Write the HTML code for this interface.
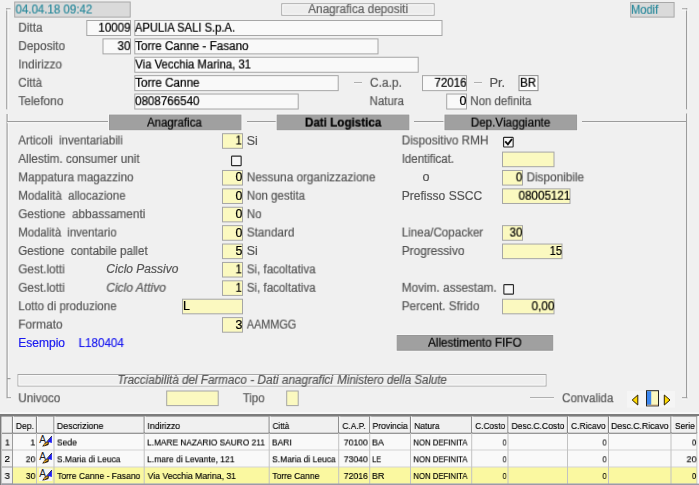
<!DOCTYPE html>
<html lang="it"><head><meta charset="utf-8"><title>Anagrafica depositi</title>
<style>
html,body{margin:0;padding:0;}
body{width:699px;height:485px;overflow:hidden;background:#f0f0f0;position:relative;font-family:"Liberation Sans",Arial,sans-serif;}
svg.bg{position:absolute;left:0;top:0;}
.t{position:absolute;white-space:pre;transform-origin:0 0;will-change:transform;-webkit-text-stroke:0.2px currentColor;}
.g{-webkit-text-stroke:0.16px currentColor;}
.k{-webkit-text-stroke:0.22px currentColor;}
</style></head><body>
<svg class="bg" width="699" height="485" viewBox="0 0 699 485">
<rect x="6.2" y="8.3" width="1.3" height="101" fill="#9c9c9c"/>
<rect x="7.5" y="8.3" width="1" height="101" fill="#fbfbfb"/>
<rect x="6.2" y="8.3" width="4.3" height="1.2" fill="#9c9c9c"/>
<rect x="6.2" y="9.5" width="4.3" height="1" fill="#fbfbfb"/>
<rect x="686" y="8.3" width="1.3" height="101" fill="#9c9c9c"/>
<rect x="687.3" y="8.3" width="1" height="101" fill="#fbfbfb"/>
<rect x="682" y="8.3" width="5.3" height="1.2" fill="#9c9c9c"/>
<rect x="682" y="9.5" width="5.3" height="1" fill="#fbfbfb"/>
<rect x="6.5" y="114" width="1.3" height="284.3" fill="#9c9c9c"/>
<rect x="7.8" y="114" width="1" height="284.3" fill="#fbfbfb"/>
<rect x="686" y="113.5" width="1.3" height="284.8" fill="#9c9c9c"/>
<rect x="687.3" y="113.5" width="1" height="284.8" fill="#fbfbfb"/>
<rect x="7" y="121" width="102" height="1.2" fill="#9c9c9c"/>
<rect x="7" y="122.2" width="102" height="1" fill="#fbfbfb"/>
<rect x="247" y="121" width="29.5" height="1.2" fill="#9c9c9c"/>
<rect x="247" y="122.2" width="29.5" height="1" fill="#fbfbfb"/>
<rect x="414" y="121" width="30.5" height="1.2" fill="#9c9c9c"/>
<rect x="414" y="122.2" width="30.5" height="1" fill="#fbfbfb"/>
<rect x="582" y="121" width="104" height="1.2" fill="#9c9c9c"/>
<rect x="582" y="122.2" width="104" height="1" fill="#fbfbfb"/>
<rect x="7" y="378" width="3.5" height="1.2" fill="#9c9c9c"/>
<rect x="7" y="397.2" width="4" height="1.2" fill="#9c9c9c"/>
<rect x="7" y="398.4" width="4" height="1" fill="#fbfbfb"/>
<rect x="682" y="397.2" width="5.3" height="1.2" fill="#9c9c9c"/>
<rect x="682" y="398.4" width="5.3" height="1" fill="#fbfbfb"/>
<rect x="14.7" y="2" width="115.5" height="15.1" fill="#dadada" stroke="#a8a8a8"/>
<rect x="281.8" y="3.8" width="152.3" height="11.4" fill="#ededed" stroke="#a2a2a2"/>
<rect x="282.8" y="4.8" width="150.3" height="9.4" fill="none" stroke="#f9f9f9"/>
<rect x="630.7" y="2.5" width="43.4" height="14.6" fill="#dadada" stroke="#a8a8a8"/>
<rect x="86.8" y="20.5" width="43.7" height="15" fill="#f9f9f9" stroke="#a6a6a6"/>
<rect x="134.8" y="20.5" width="307.2" height="15" fill="#f9f9f9" stroke="#a6a6a6"/>
<rect x="103" y="38.88" width="27.5" height="15" fill="#f9f9f9" stroke="#a6a6a6"/>
<rect x="134.8" y="38.88" width="243.2" height="15" fill="#f9f9f9" stroke="#a6a6a6"/>
<rect x="134.8" y="57.26" width="283.4" height="15" fill="#f9f9f9" stroke="#a6a6a6"/>
<rect x="134.8" y="75.64" width="203.4" height="15" fill="#f9f9f9" stroke="#a6a6a6"/>
<rect x="134.8" y="94.02" width="163.4" height="15" fill="#f9f9f9" stroke="#a6a6a6"/>
<rect x="354" y="82" width="8" height="1.2" fill="#b0b0b0"/>
<rect x="354" y="83.2" width="8" height="1" fill="#fbfbfb"/>
<rect x="422.5" y="75.64" width="44" height="15" fill="#f9f9f9" stroke="#a6a6a6"/>
<rect x="474" y="82" width="8" height="1.2" fill="#b0b0b0"/>
<rect x="474" y="83.2" width="8" height="1" fill="#fbfbfb"/>
<rect x="519" y="75.64" width="19" height="15" fill="#ffffff" stroke="#8a8a8a"/>
<rect x="446.7" y="94.02" width="19.8" height="15" fill="#f9f9f9" stroke="#a6a6a6"/>
<rect x="108.5" y="114.1" width="133.4" height="16.6" fill="none" stroke="#f6f6f6"/>
<rect x="109.5" y="115.1" width="131.4" height="14.6" fill="#a0a0a0" stroke="#979797"/>
<rect x="276.2" y="114.1" width="133.6" height="16.6" fill="none" stroke="#f6f6f6"/>
<rect x="277.2" y="115.1" width="131.6" height="14.6" fill="#a0a0a0" stroke="#979797"/>
<rect x="444" y="114.1" width="133.6" height="16.6" fill="none" stroke="#f6f6f6"/>
<rect x="445" y="115.1" width="131.6" height="14.6" fill="#a0a0a0" stroke="#979797"/>
<rect x="222.5" y="133.7" width="20" height="14.6" fill="#fbf9c0" stroke="#a6a6a6"/>
<rect x="222.5" y="170.48" width="20" height="14.6" fill="#fbf9c0" stroke="#a6a6a6"/>
<rect x="222.5" y="188.87" width="20" height="14.6" fill="#fbf9c0" stroke="#a6a6a6"/>
<rect x="222.5" y="207.26" width="20" height="14.6" fill="#fbf9c0" stroke="#a6a6a6"/>
<rect x="222.5" y="225.65" width="20" height="14.6" fill="#fbf9c0" stroke="#a6a6a6"/>
<rect x="222.5" y="244.04" width="20" height="14.6" fill="#fbf9c0" stroke="#a6a6a6"/>
<rect x="222.5" y="262.43" width="20" height="14.6" fill="#fbf9c0" stroke="#a6a6a6"/>
<rect x="222.5" y="280.82" width="20" height="14.6" fill="#fbf9c0" stroke="#a6a6a6"/>
<rect x="222.5" y="317.6" width="20" height="14.6" fill="#fbf9c0" stroke="#a6a6a6"/>
<rect x="182.5" y="299.21" width="60" height="14.6" fill="#fbf9c0" stroke="#a6a6a6"/>
<rect x="231.55" y="156.05" width="9.6" height="9.6" rx="0.7" fill="#f7f7f7" stroke="#2c2c2c" stroke-width="1.15"/>
<rect x="503.55" y="137.35" width="9.6" height="9.6" rx="0.7" fill="#f7f7f7" stroke="#2c2c2c" stroke-width="1.15"/>
<path d="M505.2 141.3 L507.9 144.3 L512 139" fill="none" stroke="#111" stroke-width="1.9"/>
<rect x="502.5" y="152.09" width="51.5" height="14.6" fill="#fbf9c0" stroke="#a6a6a6"/>
<rect x="502.5" y="170.48" width="20" height="14.6" fill="#fbf9c0" stroke="#a6a6a6"/>
<rect x="502.5" y="188.87" width="67.5" height="14.6" fill="#fbf9c0" stroke="#a6a6a6"/>
<rect x="502.5" y="225.65" width="20" height="14.6" fill="#fbf9c0" stroke="#a6a6a6"/>
<rect x="502.5" y="244.04" width="59.5" height="14.6" fill="#fbf9c0" stroke="#a6a6a6"/>
<rect x="503.85" y="284.55" width="9.6" height="9.6" rx="0.7" fill="#f7f7f7" stroke="#2c2c2c" stroke-width="1.15"/>
<rect x="502.5" y="299.21" width="51.5" height="14.6" fill="#fbf9c0" stroke="#a6a6a6"/>
<rect x="396.2" y="334.5" width="157.5" height="16.7" fill="none" stroke="#f6f6f6"/>
<rect x="397.2" y="335.5" width="155.5" height="14.7" fill="#a0a0a0" stroke="#979797"/>
<rect x="18" y="374.5" width="528" height="11.5" fill="#efefef" stroke="#a6a6a6"/>
<rect x="19" y="375.5" width="526" height="9.5" fill="none" stroke="#f9f9f9"/>
<rect x="166.7" y="391" width="51.5" height="14.6" fill="#fbf9c0" stroke="#a6a6a6"/>
<rect x="286.7" y="391" width="11.5" height="14.6" fill="#fbf9c0" stroke="#a6a6a6"/>
<rect x="530" y="397" width="24" height="1.2" fill="#b0b0b0"/>
<rect x="530" y="398.2" width="24" height="1" fill="#fbfbfb"/>
<rect x="627" y="391" width="48" height="16.5" fill="#f5f5f5"/>
<path d="M632.2 400 L637.8 395 L637.8 405 Z" fill="#ffd900" stroke="#2e2200" stroke-width="1"/><path d="M670 400 L664.3 395 L664.3 405 Z" fill="#ffd900" stroke="#2e2200" stroke-width="1"/><rect x="646.5" y="390.7" width="12" height="15.2" fill="#fbf8c0" stroke="#222" stroke-width="1"/><rect x="647" y="391.2" width="4.2" height="14.2" fill="#3a86f0"/><rect x="647" y="404.6" width="11" height="0.9" fill="#c8a070"/>
<rect x="0" y="412.3" width="699" height="2" fill="#f8f8f8"/>
<rect x="0" y="414.2" width="699" height="71" fill="#f0f0f0"/>
<rect x="0" y="414" width="699" height="2.6" fill="#7c7c7c"/>
<rect x="0" y="414.2" width="1.4" height="71" fill="#7c7c7c"/>
<rect x="12.5" y="433" width="684.5" height="17" fill="#f9f9f9"/>
<rect x="2" y="433" width="10.5" height="17" fill="#f0f0f0"/>
<rect x="12.5" y="450" width="684.5" height="17" fill="#f9f9f9"/>
<rect x="2" y="450" width="10.5" height="17" fill="#f0f0f0"/>
<rect x="12.5" y="467" width="684.5" height="17" fill="#faf8a0"/>
<rect x="2" y="467" width="10.5" height="17" fill="#f0f0f0"/>
<rect x="12.5" y="449.5" width="684.5" height="1" fill="#d4d4d4"/>
<rect x="2" y="449.5" width="10.5" height="1" fill="#9a9a9a"/>
<rect x="12.5" y="466.5" width="684.5" height="1" fill="#d4d4d4"/>
<rect x="2" y="466.5" width="10.5" height="1" fill="#9a9a9a"/>
<rect x="12.5" y="483.5" width="684.5" height="1" fill="#d4d4d4"/>
<rect x="2" y="483.5" width="10.5" height="1" fill="#9a9a9a"/>
<rect x="2" y="432.7" width="695" height="1.2" fill="#8c8c8c"/>
<rect x="11.9" y="416.5" width="1.2" height="16.5" fill="#848484"/>
<rect x="13" y="416.5" width="1" height="15.5" fill="#fcfcfc"/>
<rect x="12" y="433" width="1" height="51" fill="#9c9c9c"/>
<rect x="35.9" y="416.5" width="1.2" height="16.5" fill="#848484"/>
<rect x="37" y="416.5" width="1" height="15.5" fill="#fcfcfc"/>
<rect x="36" y="433" width="1" height="51" fill="#c2c2c2"/>
<rect x="53.4" y="416.5" width="1.2" height="16.5" fill="#848484"/>
<rect x="54.5" y="416.5" width="1" height="15.5" fill="#fcfcfc"/>
<rect x="53.5" y="433" width="1" height="51" fill="#c2c2c2"/>
<rect x="143.6" y="416.5" width="1.2" height="16.5" fill="#848484"/>
<rect x="144.7" y="416.5" width="1" height="15.5" fill="#fcfcfc"/>
<rect x="143.7" y="433" width="1" height="51" fill="#c2c2c2"/>
<rect x="268.6" y="416.5" width="1.2" height="16.5" fill="#848484"/>
<rect x="269.7" y="416.5" width="1" height="15.5" fill="#fcfcfc"/>
<rect x="268.7" y="433" width="1" height="51" fill="#c2c2c2"/>
<rect x="338.1" y="416.5" width="1.2" height="16.5" fill="#848484"/>
<rect x="339.2" y="416.5" width="1" height="15.5" fill="#fcfcfc"/>
<rect x="338.2" y="433" width="1" height="51" fill="#c2c2c2"/>
<rect x="369.1" y="416.5" width="1.2" height="16.5" fill="#848484"/>
<rect x="370.2" y="416.5" width="1" height="15.5" fill="#fcfcfc"/>
<rect x="369.2" y="433" width="1" height="51" fill="#c2c2c2"/>
<rect x="409.9" y="416.5" width="1.2" height="16.5" fill="#848484"/>
<rect x="411" y="416.5" width="1" height="15.5" fill="#fcfcfc"/>
<rect x="410" y="433" width="1" height="51" fill="#c2c2c2"/>
<rect x="471.1" y="416.5" width="1.2" height="16.5" fill="#848484"/>
<rect x="472.2" y="416.5" width="1" height="15.5" fill="#fcfcfc"/>
<rect x="471.2" y="433" width="1" height="51" fill="#c2c2c2"/>
<rect x="507.4" y="416.5" width="1.2" height="16.5" fill="#848484"/>
<rect x="508.5" y="416.5" width="1" height="15.5" fill="#fcfcfc"/>
<rect x="507.5" y="433" width="1" height="51" fill="#c2c2c2"/>
<rect x="566.9" y="416.5" width="1.2" height="16.5" fill="#848484"/>
<rect x="568" y="416.5" width="1" height="15.5" fill="#fcfcfc"/>
<rect x="567" y="433" width="1" height="51" fill="#c2c2c2"/>
<rect x="607.9" y="416.5" width="1.2" height="16.5" fill="#848484"/>
<rect x="609" y="416.5" width="1" height="15.5" fill="#fcfcfc"/>
<rect x="608" y="433" width="1" height="51" fill="#c2c2c2"/>
<rect x="670.4" y="416.5" width="1.2" height="16.5" fill="#848484"/>
<rect x="671.5" y="416.5" width="1" height="15.5" fill="#fcfcfc"/>
<rect x="670.5" y="433" width="1" height="51" fill="#c2c2c2"/>
<rect x="696.4" y="416.5" width="1.2" height="16.5" fill="#848484"/>
<rect x="697.5" y="416.5" width="1" height="15.5" fill="#fcfcfc"/>
<rect x="696.5" y="433" width="1" height="51" fill="#c2c2c2"/>
<rect x="697.5" y="416" width="1.5" height="69" fill="#fafafa"/>
<rect x="1.4" y="483.6" width="697.6" height="1.4" fill="#9c9ca6"/>
<g transform="translate(38 433)"><text x="1.2" y="9.5" font-family="Liberation Sans, sans-serif" font-size="10.2" fill="#222">A</text><path d="M13.9 3.1 L13.9 9.9 L9.2 8.7 Z" fill="#1c1cf5"/><path d="M13.9 3 L8.4 9.2" stroke="#1a1a2a" stroke-width="0.9" fill="none"/><path d="M4.1 13.4 L6.4 10.6 L9.6 8.5 L11 9.4 L10.4 12.1 L6.6 13.3 Z" fill="#2a1c14"/><path d="M5.9 12.3 L9.7 9.8" stroke="#e4a822" stroke-width="1.3" fill="none"/></g>
<g transform="translate(38 450)"><text x="1.2" y="9.5" font-family="Liberation Sans, sans-serif" font-size="10.2" fill="#222">A</text><path d="M13.9 3.1 L13.9 9.9 L9.2 8.7 Z" fill="#1c1cf5"/><path d="M13.9 3 L8.4 9.2" stroke="#1a1a2a" stroke-width="0.9" fill="none"/><path d="M4.1 13.4 L6.4 10.6 L9.6 8.5 L11 9.4 L10.4 12.1 L6.6 13.3 Z" fill="#2a1c14"/><path d="M5.9 12.3 L9.7 9.8" stroke="#e4a822" stroke-width="1.3" fill="none"/></g>
<rect x="39" y="468.5" width="13.3" height="12.5" fill="#f6f6f6"/>
<g transform="translate(38 467)"><text x="1.2" y="9.5" font-family="Liberation Sans, sans-serif" font-size="10.2" fill="#222">A</text><path d="M13.9 3.1 L13.9 9.9 L9.2 8.7 Z" fill="#1c1cf5"/><path d="M13.9 3 L8.4 9.2" stroke="#1a1a2a" stroke-width="0.9" fill="none"/><path d="M4.1 13.4 L6.4 10.6 L9.6 8.5 L11 9.4 L10.4 12.1 L6.6 13.3 Z" fill="#2a1c14"/><path d="M5.9 12.3 L9.7 9.8" stroke="#e4a822" stroke-width="1.3" fill="none"/></g>
</svg>
<span class="t" style="left:15px;top:1px;font-size:12px;line-height:16px;color:#2b8a9c;transform:translate(0.54px,0.50px) scaleX(0.9574);">04.04.18 09:42</span>
<span class="t" style="left:308px;top:1px;font-size:12px;line-height:16px;color:#626262;transform:translate(0.20px,0.10px) scaleX(0.9785);">Anagrafica depositi</span>
<span class="t" style="left:631px;top:1px;font-size:12px;line-height:16px;color:#2b8a9c;transform:translate(0.01px,0.80px) scaleX(0.9248);">Modif</span>
<span class="t" style="left:18px;top:19px;font-size:12px;line-height:16px;color:#565656;transform:translate(0.30px,0.70px) scaleX(0.9813);">Ditta</span>
<span class="t" style="left:18px;top:38px;font-size:12px;line-height:16px;color:#565656;transform:translate(0.30px,0.07px) scaleX(0.9859);">Deposito</span>
<span class="t" style="left:18px;top:56px;font-size:12px;line-height:16px;color:#565656;transform:translate(0.30px,0.44px) scaleX(0.9769);">Indirizzo</span>
<span class="t" style="left:18px;top:74px;font-size:12px;line-height:16px;color:#565656;transform:translate(0.30px,0.81px) scaleX(0.9611);">Città</span>
<span class="t" style="left:18px;top:93px;font-size:12px;line-height:16px;color:#565656;transform:translate(0.30px,0.18px) scaleX(0.9960);">Telefono</span>
<span class="t k" style="left:98px;top:19px;font-size:12px;line-height:16px;color:#000;transform:translate(0.33px,0.70px) scaleX(0.9649);">10009</span>
<span class="t k" style="left:134px;top:19px;font-size:12px;line-height:16px;color:#000;transform:translate(0.90px,0.70px) scaleX(0.9326);">APULIA SALI S.p.A.</span>
<span class="t k" style="left:117px;top:38px;font-size:12px;line-height:16px;color:#000;transform:translate(0.54px,0.07px) scaleX(0.9662);">30</span>
<span class="t k" style="left:135px;top:38px;font-size:12px;line-height:16px;color:#000;transform:translate(0.07px,0.07px) scaleX(0.9717);">Torre Canne - Fasano</span>
<span class="t k" style="left:135px;top:56px;font-size:12px;line-height:16px;color:#000;transform:translate(0.24px,0.44px) scaleX(0.9449);">Via Vecchia Marina, 31</span>
<span class="t k" style="left:135px;top:74px;font-size:12px;line-height:16px;color:#000;transform:translate(0.07px,0.81px) scaleX(0.9767);">Torre Canne</span>
<span class="t k" style="left:135px;top:93px;font-size:12px;line-height:16px;color:#000;transform:translate(0.04px,0.18px) scaleX(0.9648);">0808766540</span>
<span class="t" style="left:369px;top:74px;font-size:12px;line-height:16px;color:#565656;transform:translate(0.90px,0.81px) scaleX(0.9967);">C.a.p.</span>
<span class="t k" style="left:434px;top:74px;font-size:12px;line-height:16px;color:#000;transform:translate(0.42px,0.81px) scaleX(0.9603);">72016</span>
<span class="t" style="left:489px;top:74px;font-size:12px;line-height:16px;color:#565656;transform:translate(0.47px,0.81px) scaleX(1.0714);">Pr.</span>
<span class="t k" style="left:520px;top:74px;font-size:12px;line-height:16px;color:#000;transform:translate(0.08px,0.81px) scaleX(0.9590);">BR</span>
<span class="t" style="left:369px;top:93px;font-size:12px;line-height:16px;color:#565656;transform:translate(0.58px,0.18px) scaleX(0.9561);">Natura</span>
<span class="t k" style="left:459px;top:93px;font-size:12px;line-height:16px;color:#000;transform:translate(0.50px,0.18px) scaleX(1.0417);">0</span>
<span class="t" style="left:470px;top:93px;font-size:12px;line-height:16px;color:#565656;transform:translate(0.28px,0.18px) scaleX(0.9562);">Non definita</span>
<span class="t k" style="left:147px;top:114px;font-size:12px;line-height:16px;color:#000;transform:translate(0.00px,0.60px) scaleX(0.9536);">Anagrafica</span>
<span class="t k" style="left:304px;top:114px;font-size:12px;line-height:16px;color:#000;font-weight:bold;transform:translate(0.94px,0.60px) scaleX(0.9705);">Dati Logistica</span>
<span class="t k" style="left:470px;top:114px;font-size:12px;line-height:16px;color:#000;transform:translate(0.77px,0.60px) scaleX(0.9709);">Dep.Viaggiante</span>
<span class="t" style="left:18px;top:132px;font-size:12px;line-height:16px;color:#565656;transform:translate(0.30px,0.50px) scaleX(0.9549);">Articoli  inventariabili</span>
<span class="t" style="left:18px;top:150px;font-size:12px;line-height:16px;color:#565656;transform:translate(0.30px,0.91px) scaleX(0.9777);">Allestim. consumer unit</span>
<span class="t" style="left:18px;top:169px;font-size:12px;line-height:16px;color:#565656;transform:translate(0.30px,0.32px) scaleX(0.9699);">Mappatura magazzino</span>
<span class="t" style="left:18px;top:187px;font-size:12px;line-height:16px;color:#565656;transform:translate(0.30px,0.73px) scaleX(0.9566);">Modalità  allocazione</span>
<span class="t" style="left:18px;top:206px;font-size:12px;line-height:16px;color:#565656;transform:translate(0.30px,0.14px) scaleX(0.9815);">Gestione  abbassamenti</span>
<span class="t" style="left:18px;top:224px;font-size:12px;line-height:16px;color:#565656;transform:translate(0.30px,0.55px) scaleX(0.9434);">Modalità  inventario</span>
<span class="t" style="left:18px;top:242px;font-size:12px;line-height:16px;color:#565656;transform:translate(0.30px,0.96px) scaleX(0.9596);">Gestione  contabile pallet</span>
<span class="t" style="left:18px;top:261px;font-size:12px;line-height:16px;color:#565656;transform:translate(0.30px,0.37px) scaleX(0.9815);">Gest.lotti</span>
<span class="t" style="left:18px;top:279px;font-size:12px;line-height:16px;color:#565656;transform:translate(0.30px,0.78px) scaleX(0.9815);">Gest.lotti</span>
<span class="t" style="left:18px;top:298px;font-size:12px;line-height:16px;color:#565656;transform:translate(0.30px,0.19px) scaleX(0.9624);">Lotto di produzione</span>
<span class="t" style="left:18px;top:316px;font-size:12px;line-height:16px;color:#565656;transform:translate(0.30px,0.60px) scaleX(0.9896);">Formato</span>
<span class="t" style="left:106px;top:261px;font-size:12px;line-height:16px;color:#565656;font-style:italic;transform:translate(0.34px,0.37px) scaleX(1.0003);">Ciclo Passivo</span>
<span class="t" style="left:106px;top:279px;font-size:12px;line-height:16px;color:#565656;font-style:italic;transform:translate(0.34px,0.78px) scaleX(0.9990);">Ciclo Attivo</span>
<span class="t" style="left:18px;top:335px;font-size:12px;line-height:16px;color:#1a1af0;transform:translate(0.30px,0.01px) scaleX(1.0000);">Esempio</span>
<span class="t" style="left:78px;top:335px;font-size:12px;line-height:16px;color:#1a1af0;transform:translate(0.57px,0.01px) scaleX(0.9700);">L180404</span>
<span class="t k" style="left:235px;top:132px;font-size:12px;line-height:16px;color:#000;transform:translate(0.57px,0.50px) scaleX(0.9195);">1</span>
<span class="t" style="left:246px;top:132px;font-size:12px;line-height:16px;color:#565656;transform:translate(0.80px,0.50px) scaleX(1.0366);">Si</span>
<span class="t k" style="left:235px;top:169px;font-size:12px;line-height:16px;color:#000;transform:translate(0.41px,0.32px) scaleX(1.0243);">0</span>
<span class="t" style="left:246px;top:169px;font-size:12px;line-height:16px;color:#565656;transform:translate(0.80px,0.32px) scaleX(0.9797);">Nessuna organizzazione</span>
<span class="t k" style="left:235px;top:187px;font-size:12px;line-height:16px;color:#000;transform:translate(0.41px,0.73px) scaleX(1.0243);">0</span>
<span class="t" style="left:246px;top:187px;font-size:12px;line-height:16px;color:#565656;transform:translate(0.80px,0.73px) scaleX(0.9585);">Non gestita</span>
<span class="t k" style="left:235px;top:206px;font-size:12px;line-height:16px;color:#000;transform:translate(0.41px,0.14px) scaleX(1.0243);">0</span>
<span class="t" style="left:246px;top:206px;font-size:12px;line-height:16px;color:#565656;transform:translate(0.80px,0.14px) scaleX(0.9582);">No</span>
<span class="t k" style="left:235px;top:224px;font-size:12px;line-height:16px;color:#000;transform:translate(0.41px,0.55px) scaleX(1.0243);">0</span>
<span class="t" style="left:246px;top:224px;font-size:12px;line-height:16px;color:#565656;transform:translate(0.80px,0.55px) scaleX(0.9783);">Standard</span>
<span class="t k" style="left:235px;top:242px;font-size:12px;line-height:16px;color:#000;transform:translate(0.40px,0.96px) scaleX(1.0351);">5</span>
<span class="t" style="left:246px;top:242px;font-size:12px;line-height:16px;color:#565656;transform:translate(0.80px,0.96px) scaleX(1.0366);">Si</span>
<span class="t k" style="left:235px;top:261px;font-size:12px;line-height:16px;color:#000;transform:translate(0.57px,0.37px) scaleX(0.9195);">1</span>
<span class="t" style="left:246px;top:261px;font-size:12px;line-height:16px;color:#565656;transform:translate(0.80px,0.37px) scaleX(0.9630);">Si, facoltativa</span>
<span class="t k" style="left:235px;top:279px;font-size:12px;line-height:16px;color:#000;transform:translate(0.57px,0.78px) scaleX(0.9195);">1</span>
<span class="t" style="left:246px;top:279px;font-size:12px;line-height:16px;color:#565656;transform:translate(0.80px,0.78px) scaleX(0.9630);">Si, facoltativa</span>
<span class="t k" style="left:235px;top:316px;font-size:12px;line-height:16px;color:#000;transform:translate(0.40px,0.60px) scaleX(1.0351);">3</span>
<span class="t" style="left:246px;top:316px;font-size:12px;line-height:16px;color:#565656;transform:translate(0.80px,0.60px) scaleX(0.9049);">AAMMGG</span>
<span class="t k" style="left:183px;top:298px;font-size:12px;line-height:16px;color:#000;transform:translate(0.01px,0.19px) scaleX(1.0300);">L</span>
<span class="t" style="left:401px;top:132px;font-size:12px;line-height:16px;color:#565656;transform:translate(0.70px,0.50px) scaleX(0.9781);">Dispositivo RMH</span>
<span class="t" style="left:401px;top:150px;font-size:12px;line-height:16px;color:#565656;transform:translate(0.70px,0.91px) scaleX(0.9574);">Identificat.</span>
<span class="t" style="left:401px;top:187px;font-size:12px;line-height:16px;color:#565656;transform:translate(0.70px,0.73px) scaleX(1.0055);">Prefisso SSCC</span>
<span class="t" style="left:401px;top:224px;font-size:12px;line-height:16px;color:#565656;transform:translate(0.70px,0.55px) scaleX(0.9699);">Linea/Copacker</span>
<span class="t" style="left:401px;top:242px;font-size:12px;line-height:16px;color:#565656;transform:translate(0.70px,0.96px) scaleX(0.9908);">Progressivo</span>
<span class="t" style="left:401px;top:279px;font-size:12px;line-height:16px;color:#565656;transform:translate(0.70px,0.78px) scaleX(0.9835);">Movim. assestam.</span>
<span class="t" style="left:401px;top:298px;font-size:12px;line-height:16px;color:#565656;transform:translate(0.70px,0.19px) scaleX(0.9797);">Percent. Sfrido</span>
<span class="t" style="left:422px;top:169px;font-size:12px;line-height:16px;color:#565656;transform:translate(0.49px,0.32px) scaleX(1.0526);">o</span>
<span class="t k" style="left:515px;top:169px;font-size:12px;line-height:16px;color:#000;transform:translate(0.84px,0.32px) scaleX(0.9549);">0</span>
<span class="t" style="left:526px;top:169px;font-size:12px;line-height:16px;color:#565656;transform:translate(0.56px,0.32px) scaleX(0.9794);">Disponibile</span>
<span class="t k" style="left:518px;top:187px;font-size:12px;line-height:16px;color:#000;transform:translate(0.53px,0.73px) scaleX(0.9698);">08005121</span>
<span class="t k" style="left:509px;top:224px;font-size:12px;line-height:16px;color:#000;transform:translate(0.64px,0.55px) scaleX(0.9501);">30</span>
<span class="t k" style="left:549px;top:242px;font-size:12px;line-height:16px;color:#000;transform:translate(0.67px,0.96px) scaleX(0.9213);">15</span>
<span class="t k" style="left:531px;top:298px;font-size:12px;line-height:16px;color:#000;transform:translate(0.53px,0.19px) scaleX(0.9804);">0,00</span>
<span class="t k" style="left:428px;top:334px;font-size:12px;line-height:16px;color:#000;transform:translate(0.00px,0.70px) scaleX(0.9742);">Allestimento FIFO</span>
<span class="t" style="left:117px;top:371px;font-size:12px;line-height:16px;color:#565656;font-style:italic;transform:translate(0.45px,0.90px) scaleX(0.9711);">Tracciabilità del Farmaco </span>
<span class="t" style="left:250px;top:371px;font-size:12px;line-height:16px;color:#565656;font-style:italic;transform:translate(0.31px,0.90px) scaleX(0.9845);">- Dati anagrafici </span>
<span class="t" style="left:337px;top:371px;font-size:12px;line-height:16px;color:#565656;font-style:italic;transform:translate(0.26px,0.90px) scaleX(0.9549);">Ministero della Salute</span>
<span class="t" style="left:18px;top:390px;font-size:12px;line-height:16px;color:#565656;transform:translate(0.30px,0.20px) scaleX(0.9664);">Univoco</span>
<span class="t" style="left:242px;top:390px;font-size:12px;line-height:16px;color:#565656;transform:translate(0.77px,0.20px) scaleX(0.9485);">Tipo</span>
<span class="t" style="left:562px;top:390px;font-size:12px;line-height:16px;color:#565656;transform:translate(0.12px,0.20px) scaleX(0.9594);">Convalida</span>
<span class="t g" style="left:15px;top:419px;font-size:9.8px;line-height:13px;color:#000;transform:translate(0.81px,0.00px) scaleX(0.8784);">Dep.</span>
<span class="t g" style="left:56px;top:419px;font-size:9.8px;line-height:13px;color:#000;transform:translate(0.79px,0.00px) scaleX(0.9104);">Descrizione</span>
<span class="t g" style="left:147px;top:419px;font-size:9.8px;line-height:13px;color:#000;transform:translate(0.41px,0.00px) scaleX(0.8941);">Indirizzo</span>
<span class="t g" style="left:272px;top:419px;font-size:9.8px;line-height:13px;color:#000;transform:translate(0.60px,0.00px) scaleX(0.8245);">Città</span>
<span class="t g" style="left:342px;top:419px;font-size:9.8px;line-height:13px;color:#000;transform:translate(0.38px,0.00px) scaleX(0.8568);">C.A.P.</span>
<span class="t g" style="left:372px;top:419px;font-size:9.8px;line-height:13px;color:#000;transform:translate(0.51px,0.00px) scaleX(0.8761);">Provincia</span>
<span class="t g" style="left:414px;top:419px;font-size:9.8px;line-height:13px;color:#000;transform:translate(0.33px,0.00px) scaleX(0.8562);">Natura</span>
<span class="t g" style="left:475px;top:419px;font-size:9.8px;line-height:13px;color:#000;transform:translate(0.29px,0.00px) scaleX(0.8407);">C.Costo</span>
<span class="t g" style="left:511px;top:419px;font-size:9.8px;line-height:13px;color:#000;transform:translate(0.51px,0.00px) scaleX(0.8744);">Desc.C.Costo</span>
<span class="t g" style="left:570px;top:419px;font-size:9.8px;line-height:13px;color:#000;transform:translate(0.97px,0.00px) scaleX(0.8724);">C.Ricavo</span>
<span class="t g" style="left:611px;top:419px;font-size:9.8px;line-height:13px;color:#000;transform:translate(0.10px,0.00px) scaleX(0.8868);">Desc.C.Ricavo</span>
<span class="t g" style="left:674px;top:419px;font-size:9.8px;line-height:13px;color:#000;transform:translate(0.92px,0.00px) scaleX(0.8681);">Serie</span>
<span class="t g" style="left:4px;top:435px;font-size:9.8px;line-height:13px;color:#000;transform:translate(0.94px,0.50px) scaleX(0.8914);">1</span>
<span class="t g" style="left:30px;top:435px;font-size:9.8px;line-height:13px;color:#000;transform:translate(0.33px,0.50px) scaleX(0.9148);">1</span>
<span class="t g" style="left:56px;top:435px;font-size:9.8px;line-height:13px;color:#000;transform:translate(0.81px,0.50px) scaleX(0.8772);">Sede</span>
<span class="t g" style="left:147px;top:435px;font-size:9.8px;line-height:13px;color:#000;transform:translate(0.03px,0.50px) scaleX(0.8498);">L.MARE NAZARIO SAURO 211</span>
<span class="t g" style="left:271px;top:435px;font-size:9.8px;line-height:13px;color:#000;transform:translate(0.92px,0.50px) scaleX(0.8692);">BARI</span>
<span class="t g" style="left:343px;top:435px;font-size:9.8px;line-height:13px;color:#000;transform:translate(0.77px,0.50px) scaleX(0.8822);">70100</span>
<span class="t g" style="left:371px;top:435px;font-size:9.8px;line-height:13px;color:#000;transform:translate(0.87px,0.50px) scaleX(0.9306);">BA</span>
<span class="t g" style="left:691px;top:435px;font-size:9.8px;line-height:13px;color:#000;transform:translate(0.89px,0.50px) scaleX(0.7866);">0</span>
<span class="t g" style="left:413px;top:435px;font-size:9.8px;line-height:13px;color:#000;transform:translate(0.38px,0.50px) scaleX(0.7927);">NON DEFINITA</span>
<span class="t g" style="left:502px;top:435px;font-size:9.8px;line-height:13px;color:#000;transform:translate(0.62px,0.50px) scaleX(0.7228);">0</span>
<span class="t g" style="left:602px;top:435px;font-size:9.8px;line-height:13px;color:#000;transform:translate(0.50px,0.50px) scaleX(0.7653);">0</span>
<span class="t g" style="left:4px;top:452px;font-size:9.8px;line-height:13px;color:#000;transform:translate(0.51px,0.30px) scaleX(1.0092);">2</span>
<span class="t g" style="left:25px;top:452px;font-size:9.8px;line-height:13px;color:#000;transform:translate(0.77px,0.30px) scaleX(0.8761);">20</span>
<span class="t g" style="left:56px;top:452px;font-size:9.8px;line-height:13px;color:#000;transform:translate(0.82px,0.30px) scaleX(0.8658);">S.Maria di Leuca</span>
<span class="t g" style="left:147px;top:452px;font-size:9.8px;line-height:13px;color:#000;transform:translate(0.02px,0.30px) scaleX(0.8735);">L.mare di Levante, 121</span>
<span class="t g" style="left:272px;top:452px;font-size:9.8px;line-height:13px;color:#000;transform:translate(0.12px,0.30px) scaleX(0.8645);">S.Maria di Leuca</span>
<span class="t g" style="left:343px;top:452px;font-size:9.8px;line-height:13px;color:#000;transform:translate(0.77px,0.30px) scaleX(0.8822);">73040</span>
<span class="t g" style="left:372px;top:452px;font-size:9.8px;line-height:13px;color:#000;transform:translate(0.11px,0.30px) scaleX(0.7514);">LE</span>
<span class="t g" style="left:686px;top:452px;font-size:9.8px;line-height:13px;color:#000;transform:translate(0.55px,0.30px) scaleX(0.9159);">20</span>
<span class="t g" style="left:413px;top:452px;font-size:9.8px;line-height:13px;color:#000;transform:translate(0.38px,0.30px) scaleX(0.7927);">NON DEFINITA</span>
<span class="t g" style="left:502px;top:452px;font-size:9.8px;line-height:13px;color:#000;transform:translate(0.62px,0.30px) scaleX(0.7228);">0</span>
<span class="t g" style="left:602px;top:452px;font-size:9.8px;line-height:13px;color:#000;transform:translate(0.50px,0.30px) scaleX(0.7653);">0</span>
<span class="t g" style="left:4px;top:469px;font-size:9.8px;line-height:13px;color:#000;transform:translate(0.62px,0.00px) scaleX(0.9667);">3</span>
<span class="t g" style="left:25px;top:469px;font-size:9.8px;line-height:13px;color:#000;transform:translate(0.86px,0.00px) scaleX(0.8676);">30</span>
<span class="t g" style="left:57px;top:469px;font-size:9.8px;line-height:13px;color:#000;transform:translate(0.03px,0.00px) scaleX(0.8742);">Torre Canne - Fasano</span>
<span class="t g" style="left:147px;top:469px;font-size:9.8px;line-height:13px;color:#000;transform:translate(0.66px,0.00px) scaleX(0.8828);">Via Vecchia Marina, 31</span>
<span class="t g" style="left:272px;top:469px;font-size:9.8px;line-height:13px;color:#000;transform:translate(0.33px,0.00px) scaleX(0.8730);">Torre Canne</span>
<span class="t g" style="left:343px;top:469px;font-size:9.8px;line-height:13px;color:#000;transform:translate(0.77px,0.00px) scaleX(0.8838);">72016</span>
<span class="t g" style="left:371px;top:469px;font-size:9.8px;line-height:13px;color:#000;transform:translate(0.88px,0.00px) scaleX(0.9232);">BR</span>
<span class="t g" style="left:691px;top:469px;font-size:9.8px;line-height:13px;color:#000;transform:translate(0.89px,0.00px) scaleX(0.7866);">0</span>
<span class="t g" style="left:413px;top:469px;font-size:9.8px;line-height:13px;color:#000;transform:translate(0.38px,0.00px) scaleX(0.7927);">NON DEFINITA</span>
<span class="t g" style="left:502px;top:469px;font-size:9.8px;line-height:13px;color:#000;transform:translate(0.62px,0.00px) scaleX(0.7228);">0</span>
<span class="t g" style="left:602px;top:469px;font-size:9.8px;line-height:13px;color:#000;transform:translate(0.50px,0.00px) scaleX(0.7653);">0</span>
</body></html>
